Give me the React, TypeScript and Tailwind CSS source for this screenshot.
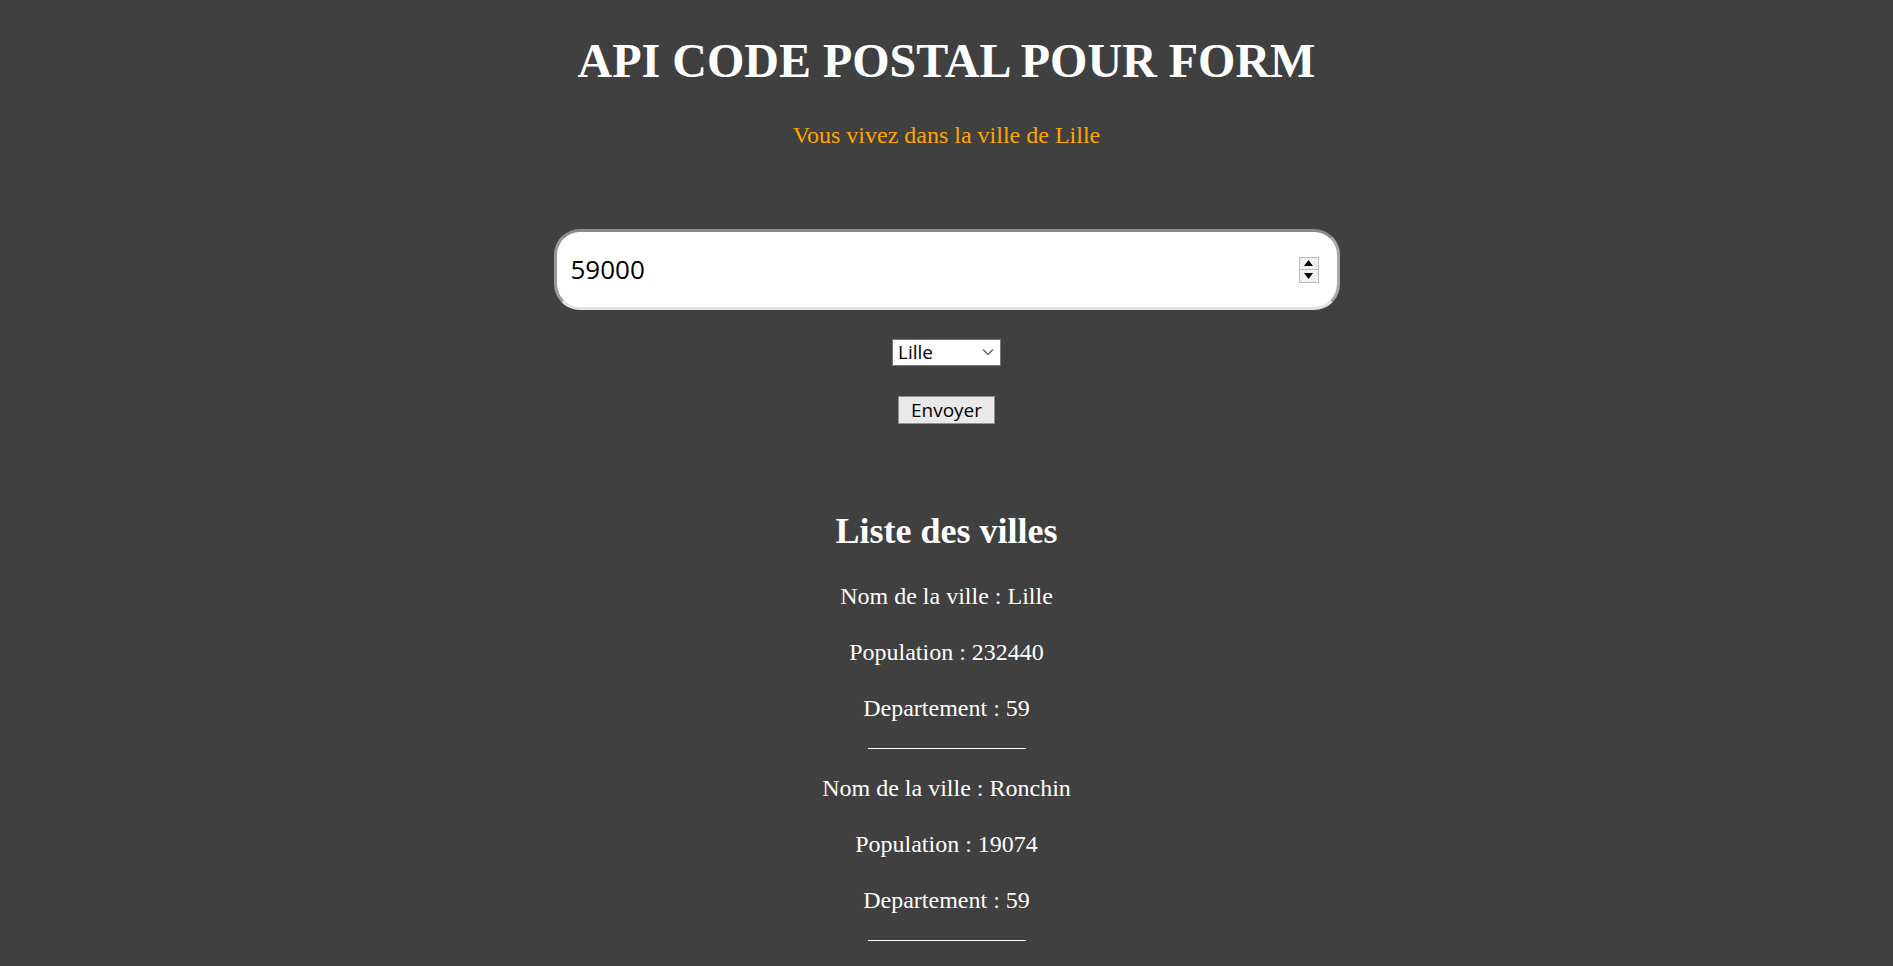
import React from 'react'

const villes = [
  { nom: 'Lille', population: 232440, departement: '59' },
  { nom: 'Ronchin', population: 19074, departement: '59' },
]

const App: React.FC = () => {
  return (
    <div className="min-h-screen w-full bg-[#404040] flex flex-col items-center font-['Liberation_Serif',serif] text-white">
      <h1 className="mt-[33px] text-[48px] leading-[55px] font-bold">API CODE POSTAL POUR FORM</h1>
      <p className="mt-[33px] text-[24px] leading-[28px] text-[#ffa500]">Vous vivez dans la ville de Lille</p>

      {/* Code postal */}
      <div className="mt-[80px] w-[786px] h-[81px] rounded-[26px] bg-white border-[3px] border-t-[#8c8c8c] border-l-[#9a9a9a] border-r-[#a8a8a8] border-b-[#e2e2e2] flex items-center pl-[14px] pr-[18px] font-['Open_Sans',sans-serif]">
        <span className="flex-1 text-[26px] text-black">59000</span>
        <div className="flex flex-col w-[20px] border border-[#bdbdbd] bg-[#f0f0f0]">
          <div className="h-[12px] flex items-center justify-center border-b border-[#bdbdbd]">
            <svg width="9" height="6" viewBox="0 0 9 6"><path d="M4.5 0 L9 6 L0 6 Z" fill="#000" /></svg>
          </div>
          <div className="h-[12px] flex items-center justify-center">
            <svg width="9" height="6" viewBox="0 0 9 6"><path d="M0 0 L9 0 L4.5 6 Z" fill="#000" /></svg>
          </div>
        </div>
      </div>

      {/* Select ville */}
      <div className="mt-[29px] w-[109px] h-[27px] bg-white border-[1.5px] border-[#767676] flex items-center pl-[5px] pr-[6px] font-['Open_Sans',sans-serif]">
        <span className="flex-1 text-[19px] leading-none text-black">Lille</span>
        <svg width="12" height="8" viewBox="0 0 12 8" className="mb-[2px]">
          <path d="M1 1.5 L6 6.5 L11 1.5" fill="none" stroke="#555" strokeWidth="1.2" />
        </svg>
      </div>

      <button className="mt-[30px] w-[97px] h-[28px] bg-[#e9e9e9] border-[1.5px] border-[#8f8f8f] text-[19px] leading-none text-black font-['Open_Sans',sans-serif]">
        Envoyer
      </button>

      <h2 className="mt-[87px] text-[36px] leading-[41px] font-bold">Liste des villes</h2>

      <div className="mt-[28px] flex flex-col items-center pb-[40px]">
        {villes.map((v, i) => (
          <div key={v.nom} className={`flex flex-col items-center ${i > 0 ? 'mt-[23px]' : ''}`}>
            <p className="text-[24px] leading-[32px]">Nom de la ville : {v.nom}</p>
            <p className="mt-[24px] text-[24px] leading-[32px]">Population : {v.population}</p>
            <p className="mt-[24px] text-[24px] leading-[32px]">Departement : {v.departement}</p>
            <div className="mt-[24px] w-[158px] h-[1px] bg-white" />
          </div>
        ))}
      </div>
    </div>
  )
}

export default App
